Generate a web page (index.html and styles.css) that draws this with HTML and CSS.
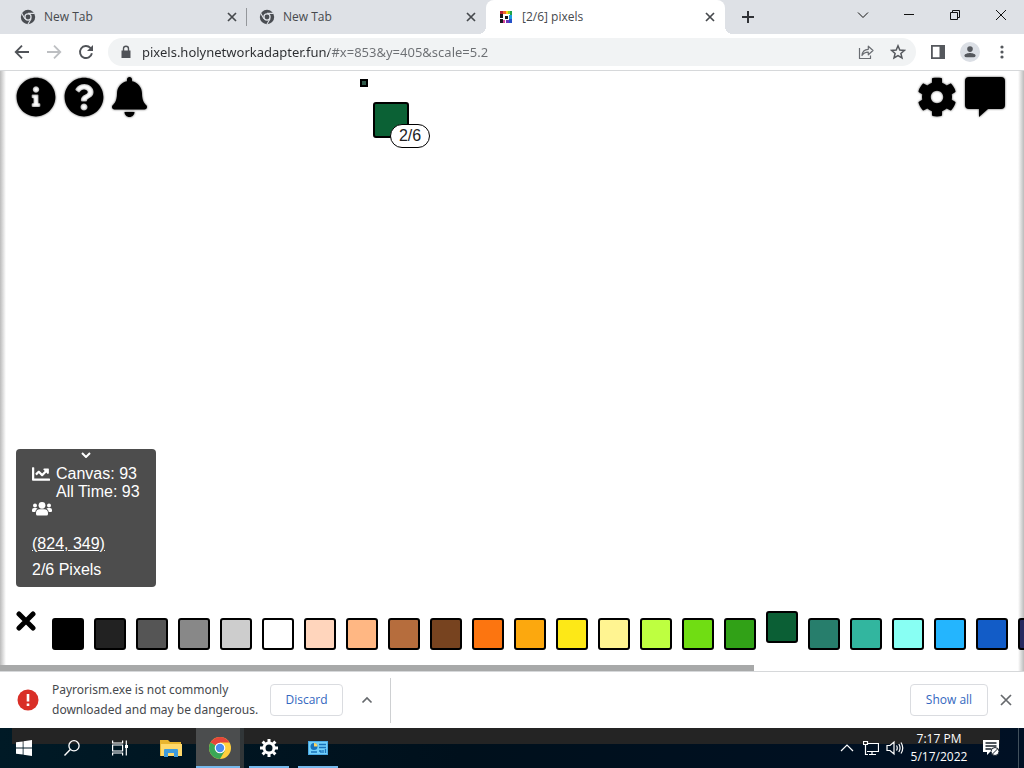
FILE: index.html
```html
<!DOCTYPE html>
<html lang="en">
<head>
<meta charset="utf-8">
<title>[2/6] pixels</title>
<link rel="stylesheet" href="styles.css">
</head>
<body>
<svg class="defs" aria-hidden="true">
  <symbol id="chrome-mono" viewBox="0 0 16 16">
    <circle cx="8" cy="8" r="7.2" fill="#4a4d52"/>
    <circle cx="8" cy="8" r="3.7" fill="#dee1e6"/>
    <circle cx="8" cy="8" r="2.4" fill="#4a4d52"/>
    <path d="M8 4.4h6.6M4.9 9.8L1.7 4.2M11.1 9.8L7.9 15.2" stroke="#dee1e6" stroke-width="1.1"/>
  </symbol>
  <symbol id="cross" viewBox="0 0 16 16">
    <path d="M4 4l8 8M12 4l-8 8" stroke="currentColor" stroke-width="1.7" fill="none"/>
  </symbol>
  <symbol id="cog" viewBox="0 0 512 512">
    <path d="M487.4 315.7l-42.6-24.6c4.3-23.2 4.3-47 0-70.2l42.6-24.6c4.9-2.8 7.1-8.6 5.5-14-11.1-35.6-30-67.8-54.7-94.6-3.8-4.1-10-5.1-14.8-2.3L380.8 110c-17.9-15.4-38.5-27.3-60.8-35.1V25.8c0-5.6-3.9-10.5-9.4-11.7-36.7-8.2-74.3-7.8-109.2 0-5.5 1.2-9.4 6.1-9.4 11.7V75c-22.2 7.9-42.8 19.8-60.8 35.1L88.7 85.5c-4.9-2.8-11-1.9-14.8 2.3-24.7 26.7-43.6 58.9-54.7 94.6-1.7 5.4.6 11.2 5.5 14L67.3 221c-4.3 23.2-4.3 47 0 70.2l-42.6 24.6c-4.9 2.8-7.1 8.6-5.5 14 11.1 35.6 30 67.8 54.7 94.6 3.8 4.1 10 5.1 14.8 2.3l42.6-24.6c17.9 15.4 38.5 27.3 60.8 35.1v49.2c0 5.6 3.9 10.5 9.4 11.7 36.7 8.2 74.3 7.8 109.2 0 5.5-1.2 9.4-6.1 9.4-11.7v-49.2c22.2-7.9 42.8-19.8 60.8-35.1l42.6 24.6c4.9 2.8 11 1.9 14.8-2.3 24.7-26.7 43.6-58.9 54.7-94.6 1.5-5.5-.7-11.3-5.6-14.1zM256 336c-44.1 0-80-35.9-80-80s35.9-80 80-80 80 35.9 80 80-35.9 80-80 80z"/>
  </symbol>
</svg>

<header class="tabstrip">
  <div class="tab tab-divided">
    <svg class="favicon"><use href="#chrome-mono"/></svg>
    <span class="tab-title">New Tab</span>
    <button class="tab-close" aria-label="Close tab"><svg><use href="#cross"/></svg></button>
  </div>
  <div class="tab">
    <svg class="favicon"><use href="#chrome-mono"/></svg>
    <span class="tab-title">New Tab</span>
    <button class="tab-close" aria-label="Close tab"><svg><use href="#cross"/></svg></button>
  </div>
  <div class="tab tab-active">
    <svg class="favicon" viewBox="0 0 16 16">
      <path d="M2 2h3v3H2z" fill="#b3223a"/><path d="M5 2h3v3H5z" fill="#f0642a"/><path d="M8 2h2v3H8z" fill="#ffd21e"/><path d="M10 2h2v3h-2z" fill="#8cd32a"/><path d="M12 2h2v4h-2z" fill="#1fa34a"/>
      <path d="M2 5h3v4H2zM2 10h3v4H2zM7 7h3v3H7z" fill="#17171c"/><path d="M11 6h3v4h-3z" fill="#1d9de0"/><path d="M11 10h3v4h-3z" fill="#2551c8"/><path d="M8 11h3v3H8z" fill="#6b35b8"/><path d="M5 11h2v3H5z" fill="#d6489b"/>
    </svg>
    <span class="tab-title">[2/6] pixels</span>
    <button class="tab-close" aria-label="Close tab"><svg><use href="#cross"/></svg></button>
  </div>
  <button class="new-tab" aria-label="New tab"><svg viewBox="0 0 16 16"><path d="M8 2v12M2 8h12" stroke="#303236" stroke-width="2"/></svg></button>
  <div class="window-controls">
    <button aria-label="Search tabs"><svg viewBox="0 0 12 12"><path d="M1 3.500l5 5 5-5"/></svg></button>
    <button aria-label="Minimize"><svg viewBox="0 0 12 12"><path d="M1 5.500h10"/></svg></button>
    <button aria-label="Restore"><svg viewBox="0 0 12 12"><path d="M1.500 3.500h7v7h-7zM3.500 3.500v-2h7v7h-2"/></svg></button>
    <button aria-label="Close"><svg viewBox="0 0 12 12"><path d="M1 1l10 10M11 1L1 11"/></svg></button>
  </div>
</header>

<nav class="toolbar">
  <button class="tool" aria-label="Back"><svg viewBox="0 0 16 16"><path d="M15 8H2M8 1.700L1.700 8 8 14.300" stroke="#505358" stroke-width="1.800" fill="none"/></svg></button>
  <button class="tool" aria-label="Forward"><svg viewBox="0 0 16 16"><path d="M1 8h13M8 1.700L14.300 8 8 14.300" stroke="#bdbfc2" stroke-width="1.800" fill="none"/></svg></button>
  <button class="tool" aria-label="Reload"><svg viewBox="0 0 16 16"><path d="M13.900 9.200a6 6 0 1 1-1.500-5.300L14 5.500" stroke="#505358" stroke-width="1.900" fill="none"/><path d="M15 1v6H9z" fill="#505358"/></svg></button>
  <div class="omnibox">
    <svg class="lock" viewBox="0 0 12 14"><path d="M1.500 5.500h9v7.500h-9z" fill="#505358"/><path d="M3.500 6V3.700a2.500 2.500 0 0 1 5 0V6" stroke="#505358" stroke-width="1.400" fill="none"/></svg>
    <input class="url" type="text" aria-label="Address" value="pixels.holynetworkadapter.fun/#x=853&amp;y=405&amp;scale=5.2">
    <button class="tool" aria-label="Share"><svg viewBox="0 0 16 16"><path d="M1.500 4v10.500h11v-3M4 11.500c.3-4 2.200-6 6.300-6.200V2.200l4.700 4.300-4.700 4.300V8.200C7.300 8.100 5.300 9.500 4 11.500z" stroke="#6a6d72" stroke-width="1.200" fill="none" stroke-linejoin="round"/></svg></button>
    <button class="tool" aria-label="Bookmark"><svg viewBox="0 0 16 16"><path d="M8 1.800l1.800 4.200 4.600.4-3.500 3 1.100 4.500-4-2.400-4 2.400 1.100-4.500-3.500-3 4.600-.4z" stroke="#55585d" stroke-width="1.500" fill="none"/></svg></button>
  </div>
  <button class="tool" aria-label="Side panel"><svg viewBox="0 0 16 16"><path d="M1.900 1.900h12.200v12.200H1.900z" stroke="#55585d" stroke-width="1.800" fill="none"/><path d="M9.500 2H14v12H9.500z" fill="#55585d"/></svg></button>
  <button class="tool profile" aria-label="Profile"><svg viewBox="0 0 16 16"><circle cx="8" cy="4.700" r="3.200" fill="#55585d"/><path d="M1.500 14v-1.500C1.500 9.800 6 9 8 9s6.500.8 6.500 3.500V14z" fill="#55585d"/></svg></button>
  <button class="tool" aria-label="Menu"><svg viewBox="0 0 16 16"><g fill="#55585d"><circle cx="8" cy="3" r="1.600"/><circle cx="8" cy="8" r="1.600"/><circle cx="8" cy="13" r="1.600"/></g></svg></button>
</nav>

<main class="board">
  <div class="board-bar">
    <button class="board-btn" aria-label="Info"><svg viewBox="0 0 512 512"><path d="M256 8C119.043 8 8 119.083 8 256c0 136.997 111.043 248 248 248s248-111.003 248-248C504 119.083 392.957 8 256 8zm0 110c23.196 0 42 18.804 42 42s-18.804 42-42 42-42-18.804-42-42 18.804-42 42-42zm56 254c0 6.627-5.373 12-12 12h-88c-6.627 0-12-5.373-12-12v-24c0-6.627 5.373-12 12-12h12v-64h-12c-6.627 0-12-5.373-12-12v-24c0-6.627 5.373-12 12-12h64c6.627 0 12 5.373 12 12v100h12c6.627 0 12 5.373 12 12v24z"/></svg></button>
    <button class="board-btn" aria-label="Help"><svg viewBox="0 0 512 512"><path d="M504 256c0 136.997-111.043 248-248 248S8 392.997 8 256C8 119.083 119.043 8 256 8s248 111.083 248 248zM262.655 90c-54.497 0-89.255 22.957-116.549 63.758-3.536 5.286-2.353 12.415 2.715 16.258l34.699 26.310c5.205 3.947 12.621 3.008 16.665-2.122 17.864-22.658 30.113-35.797 57.303-35.797 20.429 0 45.698 13.148 45.698 32.958 0 14.976-12.363 22.667-32.534 33.976C247.128 238.528 216 254.941 216 296v4c0 6.627 5.373 12 12 12h56c6.627 0 12-5.373 12-12v-1.333c0-28.462 83.186-29.647 83.186-106.667 0-58.002-60.165-102-116.531-102zM256 338c-25.365 0-46 20.635-46 46 0 25.364 20.635 46 46 46s46-20.636 46-46c0-25.365-20.635-46-46-46z"/></svg></button>
    <button class="board-btn board-btn-narrow" aria-label="Notifications"><svg viewBox="0 0 448 512"><path d="M224 512c35.320 0 63.970-28.650 63.970-64H160.030c0 35.350 28.650 64 63.970 64zm215.390-149.710c-19.320-20.760-55.470-51.990-55.470-154.290 0-77.700-54.480-139.900-127.940-155.160V32c0-17.670-14.320-32-31.980-32s-31.980 14.330-31.980 32v20.840C118.560 68.100 64.080 130.300 64.080 208c0 102.300-36.150 133.530-55.470 154.290-6 6.450-8.660 14.160-8.610 21.710.11 16.400 12.980 32 32.100 32h383.800c19.120 0 32-15.600 32.100-32 .05-7.550-2.610-15.270-8.610-21.710z"/></svg></button>
    <span class="spacer"></span>
    <button class="board-btn" aria-label="Settings"><svg><use href="#cog"/></svg></button>
    <button class="board-btn" aria-label="Chat"><svg viewBox="0 0 40 40"><path d="M4 0h32q4 0 4 4v24q0 4-4 4H23l-9 8v-8H4q-4 0-4-4V4q0-4 4-4z"/></svg></button>
  </div>
  <div class="reticle"></div>
  <div class="cursor-swatch"><span class="badge">2/6</span></div>

  <section class="stats">
    <button class="stats-toggle" aria-label="Collapse"><svg viewBox="0 0 10 6"><path d="M1 1l4 4 4-4" stroke="#fff" stroke-width="2" fill="none"/></svg></button>
    <div class="stats-row">
      <svg class="chart" viewBox="0 0 512 512"><path d="M496 384H64V80c0-8.840-7.160-16-16-16H16C7.160 64 0 71.160 0 80v336c0 17.670 14.330 32 32 32h464c8.840 0 16-7.160 16-16v-32c0-8.840-7.160-16-16-16zM464 96H345.940c-21.380 0-32.090 25.850-16.970 40.970l32.400 32.400L288 242.750l-73.370-73.370c-12.500-12.500-32.760-12.500-45.250 0l-68.690 68.690c-6.250 6.250-6.250 16.380 0 22.630l22.620 22.620c6.250 6.250 16.380 6.250 22.630 0L192 237.250l73.370 73.370c12.500 12.500 32.760 12.500 45.250 0l96-96 32.400 32.400c15.120 15.120 40.970 4.410 40.970-16.970V112c.01-8.840-7.150-16-15.990-16z"/></svg>
      <div class="counts"><span>Canvas: 93</span><span>All Time: 93</span></div>
    </div>
    <svg class="people" viewBox="0 0 20 16"><circle cx="3" cy="4.500" r="2"/><circle cx="17" cy="4.500" r="2"/><circle cx="10" cy="4.300" r="3.400"/><path d="M0 10V9q0-2 2-2h2q1 0 1.600.5Q3.500 8.800 3.200 11H1q-1 0-1-1zM20 10V9q0-2-2-2h-2q-1 0-1.600.5 2.100 1.300 2.400 3.500H19q1 0 1-1zM4 13v-1q0-3.800 3.800-3.800h4.400Q16 8.200 16 12v1q0 1.500-1.500 1.500h-9Q4 14.500 4 13z"/></svg>
    <a class="coords" href="#x=824&amp;y=349">(824, 349)</a>
    <span class="pixels">2/6 Pixels</span>
  </section>

  <div class="palette">
    <button class="deselect" aria-label="Deselect"><svg viewBox="0 0 20 20"><path d="M3 3l14 14M17 3L3 17" stroke="#000" stroke-width="5" stroke-linecap="round"/></svg></button>
    <button class="swatch c1" aria-label="Black"></button>
    <button class="swatch c2" aria-label="Dark grey"></button>
    <button class="swatch c3" aria-label="Deep grey"></button>
    <button class="swatch c4" aria-label="Medium grey"></button>
    <button class="swatch c5" aria-label="Light grey"></button>
    <button class="swatch c6" aria-label="White"></button>
    <button class="swatch c7" aria-label="Beige"></button>
    <button class="swatch c8" aria-label="Peach"></button>
    <button class="swatch c9" aria-label="Brown"></button>
    <button class="swatch c10" aria-label="Chocolate"></button>
    <button class="swatch c11" aria-label="Orange"></button>
    <button class="swatch c12" aria-label="Amber"></button>
    <button class="swatch c13" aria-label="Yellow"></button>
    <button class="swatch c14" aria-label="Pastel yellow"></button>
    <button class="swatch c15" aria-label="Lime"></button>
    <button class="swatch c16" aria-label="Green"></button>
    <button class="swatch c17" aria-label="Mid green"></button>
    <button class="swatch c18 selected" aria-label="Dark green"></button>
    <button class="swatch c19" aria-label="Dark teal"></button>
    <button class="swatch c20" aria-label="Teal"></button>
    <button class="swatch c21" aria-label="Aqua"></button>
    <button class="swatch c22" aria-label="Azure"></button>
    <button class="swatch c23" aria-label="Blue"></button>
    <button class="swatch c24" aria-label="Navy"></button>
  </div>
  <div class="scrollbar"><div class="thumb"></div></div>
</main>

<section class="downloads">
  <svg class="warn" viewBox="0 0 22 22"><circle cx="11" cy="11" r="10.500" fill="#d92f27"/><path d="M9.700 5h2.600v7.500H9.700zM9.700 14.500h2.600V17H9.700z" fill="#fff"/></svg>
  <p class="warn-text">Payrorism.exe is not commonly<br>downloaded and may be dangerous.</p>
  <button class="btn discard">Discard</button>
  <button class="more" aria-label="More options"><svg viewBox="0 0 12 12"><path d="M1.500 8.500L6 4l4.500 4.500" stroke="#66696d" stroke-width="1.700" fill="none"/></svg></button>
  <span class="rule"></span>
  <span class="spacer"></span>
  <button class="btn show-all">Show all</button>
  <button class="dismiss" aria-label="Close downloads"><svg viewBox="0 0 12 12"><path d="M1 1l10 10M11 1L1 11" stroke="#66696d" stroke-width="1.700"/></svg></button>
</section>

<footer class="taskbar">
  <button class="task" aria-label="Start"><svg viewBox="0 0 16 16"><path d="M0 2.300l6.700-.9v6.100H0zM7.500 1.300L16 0v7.500H7.500zM0 8.400h6.700v6.200L0 13.700zM7.500 8.400H16V16l-8.500-1.200z" fill="#fff"/></svg></button>
  <button class="task" aria-label="Search"><svg viewBox="0 0 16 16"><circle cx="10" cy="5.800" r="5.100" stroke="#fff" stroke-width="1.300" fill="none"/><path d="M6.300 9.500L.5 15.500" stroke="#fff" stroke-width="1.400"/></svg></button>
  <button class="task" aria-label="Task view"><svg viewBox="0 0 16 16"><path d="M.600 .5v2.500h10V.5M.600 15.500v-2.500h10v2.500M.600 5h10v6H.600zM14.300 .5v15" stroke="#fff" stroke-width="1.200" fill="none"/><path d="M13 5h3v3h-3z" fill="#fff"/></svg></button>
  <button class="task task-app" aria-label="File Explorer"><svg class="app-icon" viewBox="0 0 22 22"><path d="M0 3h8l2 2h11v14H0z" fill="#e9b52f"/><path d="M1 7h21v12H1z" fill="#ffd96b"/><path d="M4 20v-7q0-1 1-1h12q1 0 1 1v7h-4v-4H8v4z" fill="#3f9bdc"/></svg></button>
  <button class="task task-app task-current" aria-label="Chrome"><svg class="app-icon" viewBox="0 0 22 22"><circle cx="11" cy="11" r="11" fill="#ffcf3e"/><path d="M11 11L1.500 5.500A11 11 0 0 1 20.500 5.500H11z" fill="#e5453a"/><path d="M1.500 5.500A11 11 0 0 0 11 22l4.800-8.300L11 11z" fill="#3aa757"/><circle cx="11" cy="11" r="5.300" fill="#fff"/><circle cx="11" cy="11" r="4.200" fill="#4a8af0"/></svg></button>
  <button class="task task-app task-open" aria-label="Settings"><svg class="cog-icon" viewBox="0 0 18 18"><circle cx="9" cy="9" r="5" fill="none" stroke="#fff" stroke-width="3"/><path d="M9 0v3M9 15v3M0 9h3M15 9h3M2.600 2.600l2.200 2.200M13.200 13.200l2.200 2.200M2.600 15.400l2.200-2.200M13.200 4.800l2.200-2.200" stroke="#fff" stroke-width="3"/></svg></button>
  <button class="task task-app task-open" aria-label="Control Panel"><svg class="app-icon" viewBox="0 0 22 22"><path d="M1 4h20v14H1z" fill="#4aa9e4"/><path d="M2 5h18v12H2z" fill="#72d0fa"/><circle cx="7" cy="9.500" r="3.500" fill="#1872bb"/><path d="M7 9.500V6a3.500 3.500 0 0 1 3.500 3.500z" fill="#ffd45e"/><path d="M12 7.500h7M12 10.500h7M4 15h6M12 14h2v2M16 13v3M18.500 12v4" stroke="#1872bb" stroke-width="1.300" fill="none"/></svg></button>
  <span class="spacer"></span>
  <div class="tray">
    <button aria-label="Hidden icons"><svg viewBox="0 0 16 16"><path d="M2 11l6-6 6 6"/></svg></button>
    <button aria-label="Network"><svg viewBox="0 0 16 16"><path d="M4 3.500h11.500v8H4M9 11.500v3M6 14.500h7M.500 1.500h4v3h-4zM2.500 4.500v10H5"/></svg></button>
    <button aria-label="Volume"><svg viewBox="0 0 18 16"><path d="M1 5.500h3l4-3.500v12l-4-3.500H1zM10.500 5.500q1.500 2.500 0 5M12.800 4q2.500 4 0 8M15 2.500q3.500 5.500 0 11"/></svg></button>
  </div>
  <time class="clock" datetime="2022-05-17T19:17"><span>7:17 PM</span><span>5/17/2022</span></time>
  <button class="notices" aria-label="Notifications"><svg viewBox="0 0 18 18"><path d="M1 1h16v12H8l-3 3v-3H1z" fill="#fff"/><path d="M3.500 4h11M3.500 7h11M3.500 10h6" stroke="#17202a" stroke-width="1.300"/><circle cx="13" cy="12.500" r="4" fill="#fff" stroke="#17202a"/><path d="M10.500 15l5-5" stroke="#17202a"/></svg></button>
  <span class="show-desktop"></span>
</footer>
</body>
</html>
```
FILE: styles.css
```css
* { box-sizing: border-box; }
body {
  margin: 0;
  height: 100vh;
  display: flex;
  flex-direction: column;
  overflow: hidden;
  background: #fff;
  font: 12px/16px "Open Sans", "Noto Sans", sans-serif;
  color: #46494d;
}
button {
  display: flex;
  align-items: center;
  justify-content: center;
  flex: none;
  margin: 0;
  padding: 0;
  border: 0;
  background: none;
  font: inherit;
  color: inherit;
}
svg { display: block; flex: none; width: 16px; height: 16px; }
.defs { position: absolute; width: 0; height: 0; }
.spacer { flex: 1; }

/* Tabs */
.tabstrip { display: flex; height: 34px; flex: none; padding-left: 8px; background: #dee1e6; }
.tab {
  display: flex;
  align-items: center;
  flex: 0 1 239px;
  min-width: 0;
  gap: 8px;
  padding: 0 7px 0 12px;
}
.tab-divided { background: linear-gradient(#94979b, #94979b) right center / 1px 18px no-repeat; }
.tab-title { flex: 1; white-space: nowrap; }
.tab-active { background: #fff; border-radius: 8px 8px 0 0; position: relative; }
.tab-active::before, .tab-active::after {
  content: "";
  position: absolute;
  bottom: 0;
  width: 8px;
  height: 8px;
}
.tab-active::before { left: -8px; background: radial-gradient(circle at 0 0, #dee1e6 8px, #fff 8px); }
.tab-active::after { right: -8px; background: radial-gradient(circle at 100% 0, #dee1e6 8px, #fff 8px); }
.new-tab { width: 46px; }
.window-controls { display: flex; height: 29px; margin-left: auto; }
.window-controls button { width: 46px; }
.window-controls svg { width: 12px; height: 12px; fill: none; stroke: #111; }

/* Toolbar */
.toolbar {
  display: flex;
  align-items: center;
  flex: none;
  height: 37px;
  padding: 0 6px;
  border-bottom: 1px solid #d6d8da;
}
.tool { width: 32px; height: 28px; }
.omnibox {
  display: flex;
  align-items: center;
  flex: 1;
  height: 28px;
  margin: 0 6px;
  padding: 0 2px 0 12px;
  border-radius: 14px;
  background: #f1f3f4;
}
.lock { width: 12px; height: 14px; }
.url {
  flex: 1;
  min-width: 0;
  margin-left: 10px;
  padding: 0;
  border: 0;
  outline: 0;
  font: 13px/20px "Noto Sans", "Open Sans", sans-serif;
  color: transparent;
  background: linear-gradient(90deg, #2b2d30 187px, #6c6f73 187px);
  -webkit-background-clip: text;
  background-clip: text;
}
.profile svg { width: 20px; height: 20px; padding: 3px; border-radius: 50%; background: #dbdfe5; }

/* Drawing board */
.board {
  position: relative;
  display: flex;
  flex-direction: column;
  flex: 1;
  min-height: 0;
  overflow: hidden;
  background:
    linear-gradient(90deg, #bbb, #fff) left / 6px 100% no-repeat,
    linear-gradient(270deg, #bbb, #fff) right / 6px 100% no-repeat;
  font: 16px/18px "Liberation Sans", Arial, sans-serif;
}
.board-bar { display: flex; gap: 8px; padding: 6px 19px 0 16px; margin-bottom: auto; }
.board-btn svg { width: 40px; height: 40px; overflow: visible; filter: drop-shadow(0 0 1px #555); }
.board-btn-narrow svg { width: 35px; }
.reticle {
  position: absolute;
  left: 360px;
  top: 8px;
  width: 8px;
  height: 8px;
  border: 2px solid #000;
  background: #30594a;
}
.cursor-swatch {
  position: absolute;
  left: 373px;
  top: 31px;
  width: 36px;
  height: 36px;
  border: 2px solid #000;
  border-radius: 3px;
  background: #0b6135;
}
.badge {
  position: absolute;
  left: 15px;
  top: 20px;
  width: 40px;
  height: 24px;
  border: 1px solid #000;
  border-radius: 12px;
  background: #fff;
  color: #222;
  line-height: 22px;
  text-align: center;
}
.stats {
  display: flex;
  flex-direction: column;
  align-items: flex-start;
  align-self: flex-start;
  width: 140px;
  margin: 0 16px 24px;
  padding: 2px 16px 8px;
  border-radius: 4px;
  background: #4d4d4d;
  color: #fff;
}
.stats svg { fill: #fff; }
.stats-toggle { align-self: center; height: 8px; margin-bottom: 6px; }
.stats-toggle svg { width: 10px; height: 6px; }
.stats-row { display: flex; gap: 6px; white-space: nowrap; }
.stats .chart { width: 18px; height: 18px; }
.counts { display: flex; flex-direction: column; }
.people { width: 20px; height: 16px; }
.stats .coords { margin-top: 18px; color: #fff; }
.pixels { margin-top: 8px; }
.palette { display: flex; gap: 10px; padding: 0 0 15px 16px; }
.deselect { width: 20px; height: 20px; margin-right: 6px; }
.deselect svg { width: 20px; height: 20px; }
.swatch {
  width: 32px;
  height: 32px;
  margin-top: 7px;
  border: 2px solid #000;
  border-radius: 3px;
}
.selected { margin-top: 0; }
.c1 { background: #000; }
.c2 { background: #222; }
.c3 { background: #555; }
.c4 { background: #888; }
.c5 { background: #cdcdcd; }
.c6 { background: #fff; }
.c7 { background: #ffd5bc; }
.c8 { background: #ffb783; }
.c9 { background: #b66d3d; }
.c10 { background: #77431f; }
.c11 { background: #fc7510; }
.c12 { background: #fca80e; }
.c13 { background: #fde817; }
.c14 { background: #fff491; }
.c15 { background: #beff40; }
.c16 { background: #70dd13; }
.c17 { background: #31a117; }
.c18 { background: #0b5f35; }
.c19 { background: #277e6c; }
.c20 { background: #32b69f; }
.c21 { background: #88fff3; }
.c22 { background: #24b5fe; }
.c23 { background: #125cc7; }
.c24 { background: #262960; }
.scrollbar { height: 6px; flex: none; }
.thumb { width: 73.6%; height: 6px; background: #a8a9a9; }

/* Download shelf */
.downloads {
  display: flex;
  align-items: center;
  flex: none;
  height: 57px;
  padding: 0 12px 0 17px;
  border-top: 1px solid #d6d8da;
}
.warn { width: 22px; height: 22px; }
.warn-text {
  flex: none;
  width: 210px;
  margin: 0 8px 0 13px;
  font-family: "Noto Sans", "Open Sans", sans-serif;
  line-height: 20px;
  white-space: nowrap;
}
.btn {
  height: 32px;
  border: 1px solid #dadce0;
  border-radius: 4px;
  background: #fff;
  color: #3367c0;
  font-weight: 500;
}
.discard { width: 73px; }
.show-all { width: 78px; }
.more { width: 47px; }
.more svg, .dismiss svg { width: 12px; height: 12px; }
.rule { width: 1px; height: 45px; background: #ced0d2; }
.dismiss { width: 12px; margin-left: 12px; }

/* Taskbar */
.taskbar {
  display: flex;
  align-items: stretch;
  flex: none;
  height: 40px;
  background:
    linear-gradient(#242424, #242424) 12px 0 / calc(100% - 36px) 16px no-repeat,
    linear-gradient(90deg, #001a26, #00101c 45%, #001024);
  color: #fff;
}
.task { width: 48px; }
.task-app { margin-left: 1px; }
.task:nth-child(4) { margin-left: 3px; }
.app-icon { width: 22px; height: 22px; }
.cog-icon { width: 18px; height: 18px; }
.task-current { background: linear-gradient(#76b9ed, #76b9ed) left bottom / 44px 2px no-repeat, linear-gradient(90deg, #4b4d4e 44px, #313638 44px); }
.task-open { background: linear-gradient(#76b9ed, #76b9ed) center bottom / 40px 2px no-repeat; }
.tray { display: flex; }
.tray button { width: 24px; }
.tray svg { fill: none; stroke: #fff; stroke-width: 1.2; }
.tray button:last-child svg { width: 18px; }
.clock {
  display: flex;
  flex-direction: column;
  justify-content: center;
  width: 64px;
  line-height: 18px;
  text-align: center;
}
.notices { width: 40px; }
.notices svg { width: 18px; height: 18px; }
.show-desktop { width: 13px; background: linear-gradient(#41505c, #41505c) 7px 0 / 1px 100% no-repeat; }
```
